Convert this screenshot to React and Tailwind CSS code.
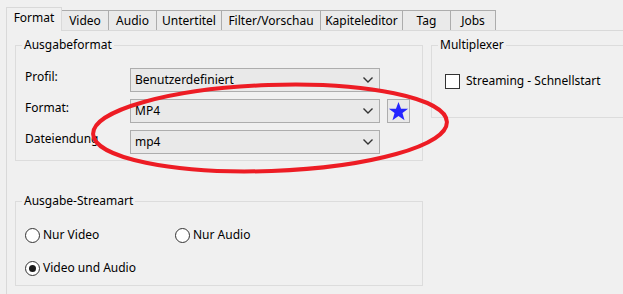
import React from 'react'

const tabs = ['Video', 'Audio', 'Untertitel', 'Filter/Vorschau', 'Kapiteleditor', 'Tag', 'Jobs']
const tabWidths = ['w-[47px]', 'w-[48px]', 'w-[65px]', 'w-[99px]', 'w-[82px]', 'w-[48px]', 'w-[45px]']

function Chevron() {
  return (
    <svg width="10" height="6" viewBox="0 0 10 6" className="shrink-0">
      <polyline points="0.5,0.5 5,5 9.5,0.5" fill="none" stroke="#333" strokeWidth="1.4" />
    </svg>
  )
}

function Combo({ value }) {
  return (
    <div className="flex items-center justify-between w-[250px] h-[24px] pl-[4px] pr-[6px] border border-[#adadad] bg-[#e9e9e9]">
      <span>{value}</span>
      <Chevron />
    </div>
  )
}

function GroupBox({ title, className, children }) {
  return (
    <div className={'relative border border-[#dcdcdc] ' + className}>
      <span className="absolute -top-[9px] left-[6px] px-[2px] bg-[#f0f0f0] leading-[16px]">{title}</span>
      {children}
    </div>
  )
}

function Radio({ checked, label }) {
  return (
    <div className="flex items-center gap-[3px]">
      <div className="w-[15px] h-[15px] rounded-full border border-[#333] bg-white flex items-center justify-center">
        {checked && <div className="w-[7px] h-[7px] rounded-full bg-[#1a1a1a]" />}
      </div>
      <span>{label}</span>
    </div>
  )
}

export default function App() {
  return (
    <div className="relative w-[623px] h-[294px] overflow-hidden bg-[#f0f0f0] text-[12px] text-black font-['Noto_Sans',sans-serif]">
      {/* Tab bar */}
      <div className="flex items-end h-[24px] pl-[6px] mt-[7px] -mb-px">
        <div className="relative z-10 flex items-center justify-center w-[56px] h-[24px] pb-[3px] border-x border-t border-[#d9d9d9] bg-[#f0f0f0]">
          Format
        </div>
        {tabs.map((t, i) => (
          <div
            key={t}
            className={'flex items-center justify-center h-[20px] mb-px border-t border-r border-[#acacac] bg-[#eaeaea] ' + tabWidths[i]}
          >
            {t}
          </div>
        ))}
      </div>

      {/* Pane */}
      <div className="ml-[6px] h-[300px] border-l border-t border-[#d9d9d9] pt-[14px] pl-[8px]">
        <div className="flex gap-[8px] items-start">
          <GroupBox title="Ausgabeformat" className="w-[408px] h-[116px] shrink-0">
            <div className="flex flex-col gap-[7px] pt-[22px] pl-[9px]">
              <div className="flex items-center">
                <span className="w-[105px] mb-[6px]">Profil:</span>
                <Combo value="Benutzerdefiniert" />
              </div>
              <div className="flex items-center">
                <span className="w-[105px] mb-[6px]">Format:</span>
                <Combo value="MP4" />
                <div className="ml-[7px] w-[23px] h-[24px] border border-[#adadad] bg-[#e9e9e9] flex items-center justify-center">
                  <svg width="21" height="21" viewBox="0 0 24 24">
                    <polygon
                      points="12,1 14.9,8.8 23,8.8 16.5,13.8 18.9,22 12,17.1 5.1,22 7.5,13.8 1,8.8 9.1,8.8"
                      fill="#2424ff"
                    />
                  </svg>
                </div>
              </div>
              <div className="flex items-center">
                <span className="w-[105px] mb-[6px]">Dateiendung</span>
                <Combo value="mp4" />
              </div>
            </div>
          </GroupBox>
          <GroupBox title="Multiplexer" className="w-[260px] h-[73px] shrink-0">
            <div className="flex items-center gap-[6px] pt-[26px] pl-[13px]">
              <div className="w-[15px] h-[15px] border border-[#333] bg-white" />
              <span>Streaming - Schnellstart</span>
            </div>
          </GroupBox>
        </div>

        <GroupBox title="Ausgabe-Streamart" className="mt-[40px] w-[408px] h-[85px]">
          <div className="flex flex-col gap-[15px] pt-[24px] pl-[9px]">
            <div className="flex">
              <div className="w-[150px]">
                <Radio label="Nur Video" />
              </div>
              <Radio label="Nur Audio" />
            </div>
            <Radio checked label="Video und Audio" />
          </div>
        </GroupBox>
      </div>

      {/* red annotation ellipse */}
      <svg className="absolute inset-0 pointer-events-none" width="623" height="294">
        <ellipse
          cx="270"
          cy="128"
          rx="177"
          ry="43"
          fill="none"
          stroke="#ed1c24"
          strokeWidth="4"
          transform="rotate(-2 270 128)"
        />
      </svg>
    </div>
  )
}
